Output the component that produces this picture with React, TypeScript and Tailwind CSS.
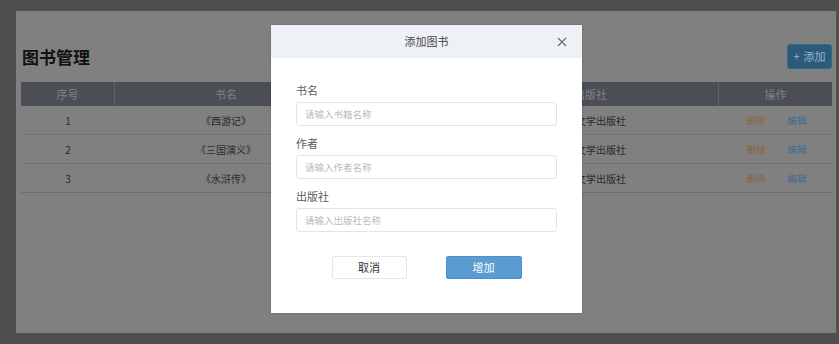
import React from "react";

const rows = [
  { id: 1, name: "《西游记》", author: "吴承恩", pub: "人民文学出版社" },
  { id: 2, name: "《三国演义》", author: "罗贯中", pub: "人民文学出版社" },
  { id: 3, name: "《水浒传》", author: "施耐庵", pub: "人民文学出版社" },
];

const font = { fontFamily: '"Noto Sans CJK SC", "Noto Sans", "Liberation Sans", sans-serif' };

export default function App() {
  return (
    <div className="relative w-[839px] h-[344px] bg-[#4f4f4f] overflow-hidden" style={font}>
      <div className="pt-[11px] pl-[16px] pr-[3px]">
        <div className="h-[322px] bg-[#808080] pl-[5px] pr-[4px] pt-[33px]">
          <div className="flex items-center justify-between h-[25px]">
            <h1 className="text-[17px] font-bold text-[#111] leading-none pl-[1px]">图书管理</h1>
            <button className="h-[25px] w-[45px] rounded-[3px] bg-[#2c5a7b] border border-[#356788] text-[#9db4c6] text-[11px] flex items-center justify-center gap-[4px]">
              <span>+</span>
              <span>添加</span>
            </button>
          </div>
          <div className="mt-[13px]">
            <div className="flex h-[24px] bg-[#4b4e55] text-[#7e8189] text-[11px] items-center">
              <div className="w-[94px] text-center border-r border-[#61646b] h-full flex items-center justify-center">序号</div>
              <div className="w-[222px] text-center h-full flex items-center justify-center">书名</div>
              <div className="w-[126px] text-center h-full flex items-center justify-center">作者</div>
              <div className="w-[256px] text-center border-r border-[#61646b] h-full flex items-center justify-center">出版社</div>
              <div className="flex-1 text-center h-full flex items-center justify-center">操作</div>
            </div>
            {rows.map((r, i) => (
              <div
                key={r.id}
                className={`flex h-[29px] items-center text-[10px] text-[#2a2a2a] border-b ${i === rows.length - 1 ? "border-[#6e6e6e]" : "border-[#747474]"}`}
              >
                <div className="w-[94px] text-center">{r.id}</div>
                <div className="w-[222px] text-center">{r.name}</div>
                <div className="w-[126px] text-center">{r.author}</div>
                <div className="w-[256px] text-center">{r.pub}</div>
                <div className="flex-1 flex justify-center gap-[22px] text-[9.5px] pl-[2px]">
                  <span className="text-[#8a6440]">删除</span>
                  <span className="text-[#3f6d91]">编辑</span>
                </div>
              </div>
            ))}
          </div>
        </div>
      </div>

      <div className="absolute left-[271px] top-[25px] w-[311px] h-[288px] bg-white shadow-[0_0_2px_rgba(0,0,0,0.25)]">
        <div className="relative h-[33px] bg-[#eef2f7] flex items-center justify-center">
          <span className="text-[11px] text-[#444]">添加图书</span>
          <svg className="absolute right-[15px] top-[12px]" width="10" height="10" viewBox="0 0 10 10">
            <path d="M1 1 L9 9 M9 1 L1 9" stroke="#6b6b6b" strokeWidth="1.1" fill="none" />
          </svg>
        </div>
        <div className="px-[25px] pt-[24px]">
          {[
            { label: "书名", ph: "请输入书籍名称" },
            { label: "作者", ph: "请输入作者名称" },
            { label: "出版社", ph: "请输入出版社名称" },
          ].map((f, i) => (
            <div key={f.label} className={i > 0 ? "mt-[9px]" : ""}>
              <div className="h-[16px] leading-[16px] text-[11px] text-[#5a5a5a]">{f.label}</div>
              <input
                className="mt-[4px] block w-full h-[24px] rounded-[3px] border border-[#e2e4e8] px-[8px] text-[9.5px] outline-none placeholder:text-[#b8bcc2]"
                placeholder={f.ph}
                style={font}
              />
            </div>
          ))}
          <div className="mt-[24px] flex justify-center gap-[39px]">
            <button className="w-[75px] h-[23px] border border-[#e6e6e6] rounded-[2px] bg-white text-[11px] text-[#333]">取消</button>
            <button className="w-[76px] h-[23px] border border-[#4a8fd6] rounded-[2px] bg-[#5a9bd0] text-[11px] text-white">增加</button>
          </div>
        </div>
      </div>
    </div>
  );
}
